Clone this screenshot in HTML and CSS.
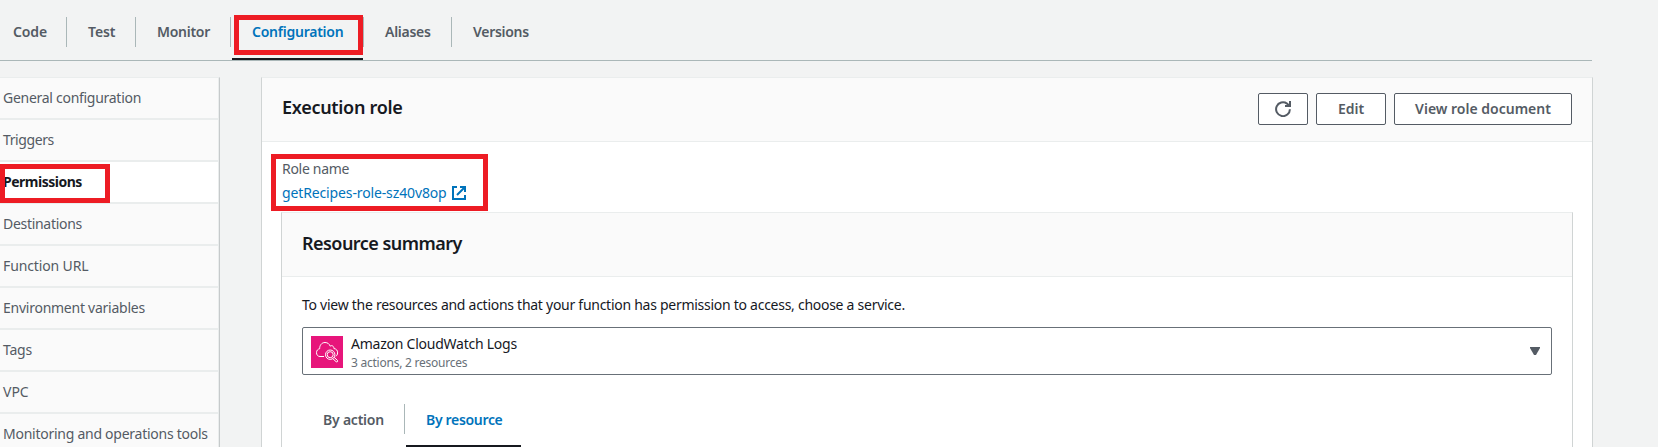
FILE: index.html
```html
<!DOCTYPE html>
<html lang="en">
<head>
<meta charset="utf-8">
<title>Execution role</title>
<link rel="stylesheet" href="styles.css">
</head>
<body>
<nav class="tabs">
  <a class="tab tab-code"><span class="t-code">Code</span></a>
  <a class="tab tab-test"><span class="t-test">Test</span></a>
  <a class="tab tab-monitor"><span class="t-monitor">Monitor</span></a>
  <a class="tab tab-config active"><span class="t-config">Configuration</span><i class="mark mark-config"></i></a>
  <a class="tab tab-aliases"><span class="t-aliases">Aliases</span></a>
  <a class="tab tab-versions"><span class="t-versions">Versions</span></a>
</nav>
<div class="layout">
  <aside class="side">
    <a class="item"><span class="s-general">General configuration</span></a>
    <a class="item"><span class="s-triggers">Triggers</span></a>
    <a class="item current"><span class="s-perm">Permissions</span><i class="mark mark-perm"></i></a>
    <a class="item"><span class="s-dest">Destinations</span></a>
    <a class="item"><span class="s-url">Function URL</span></a>
    <a class="item"><span class="s-env">Environment variables</span></a>
    <a class="item"><span class="s-tags">Tags</span></a>
    <a class="item"><span class="s-vpc">VPC</span></a>
    <a class="item"><span class="s-mon">Monitoring and operations tools</span></a>
  </aside>
  <main class="panel">
    <header class="panel-head">
      <h2><span class="h-exec">Execution role</span></h2>
      <div class="actions">
        <button class="btn btn-refresh" aria-label="Refresh"><svg width="16" height="16" viewBox="0 0 16 16" fill="none" stroke="#545b64" stroke-width="2"><path d="M14.900 8.200A6.900 6.900 0 1 1 12 2.600L14.600 5"/><path d="M15 0v5H10"/></svg></button>
        <button class="btn btn-edit"><span class="b-edit">Edit</span></button>
        <button class="btn btn-view"><span class="b-view">View role document</span></button>
      </div>
    </header>
    <section class="role">
      <div class="label"><span class="r-label">Role name</span></div>
      <a class="link"><span class="r-link">getRecipes-role-sz40v8op</span><svg class="ext" width="14" height="14" viewBox="0 0 14 14" fill="none" stroke="#0073bb" stroke-width="2"><path d="M5 1H1v12h12V9"/><path d="M8 1h5v5M13 1L5 9"/></svg></a>
      <i class="mark mark-role"></i>
    </section>
    <section class="panel inner">
      <header class="inner-head"><h2><span class="h-res">Resource summary</span></h2></header>
      <p class="desc"><span class="d-text">To view the resources and actions that your function has permission to access, choose a service.</span></p>
      <div class="select">
        <svg class="service" width="32" height="32" viewBox="0 0 32 32"><rect width="32" height="32" fill="#e7157b"/><g fill="none" stroke="#fff" stroke-width="1"><path d="M13 20.500H9C6.800 20.500 5.500 18.800 5.500 16.700C5.500 14.500 6.900 13 8.700 12.700C8.500 9.500 10.600 6.500 14 6.500C16.700 6.500 18.400 8 19.200 10.200C20.600 8.900 23 10 22.900 12.500C25.300 12.900 26.700 14.400 26.600 16.900C26.500 18.500 25.900 19.700 24.700 20.300"/><circle cx="19.200" cy="18.700" r="4.700"/><circle cx="19.200" cy="18.700" r="3"/><path d="M21.800 22.700L25.100 25.700C26.300 26.500 27.300 25.200 26.400 24.300L23.100 21.300"/></g></svg>
        <div class="choice"><span class="c-name">Amazon CloudWatch Logs</span><span class="c-sub">3 actions, 2 resources</span></div>
        <svg class="caret" width="10" height="8" viewBox="0 0 10 8"><path d="M0 0h10v1L6 8H4L0 1z" fill="#545b64"/></svg>
      </div>
      <nav class="subtabs">
        <a class="tab sub-action"><span class="t-action">By action</span></a>
        <a class="tab sub-resource active"><span class="t-resource">By resource</span></a>
      </nav>
    </section>
  </main>
</div>
</body>
</html>
```
FILE: styles.css
```css
* { box-sizing: border-box; }
body { margin: 0; height: 447px; overflow: hidden; background: #f2f3f3; color: #16191f; font: 14px/22px "Noto Sans", "Open Sans", sans-serif; }
span { white-space: nowrap; }
h2, p { margin: 0; }
h2 { font-size: 18px; line-height: 22px; font-weight: 600; }

.tabs { display: flex; width: 1592px; height: 61px; border-bottom: 1px solid #aab7b8; }
.tab { position: relative; display: block; height: 60px; padding: 21px 0 0 20px; font-weight: 600; color: #545b64; }
.tab::after { content: ""; position: absolute; right: 0; top: 17px; width: 1px; height: 30px; background: #aab7b8; }
.tab:last-child::after { display: none; }
.active { color: #0073bb; }
.active::before { content: ""; position: absolute; left: 1px; right: 0; bottom: 0; height: 2px; background: #16191f; }
.tab-code { width: 67px; padding-left: 13px; }
.tab-test { width: 69px; padding-left: 21px; }
.tab-monitor { width: 95px; padding-left: 21px; }
.tab-config { width: 132px; padding-left: 21px; }
.tab-config::after { right: -1px; }
.tab-aliases { width: 89px; padding-left: 22px; }
.tab-versions { width: 90px; padding-left: 21px; }

.mark { position: absolute; border: 5px solid #ed1c24; }
.mark-config { left: 3px; top: 15px; width: 129px; height: 40px; z-index: 1; }
.mark-perm { left: 0; top: 2px; width: 110px; height: 39px; z-index: 1; }
.mark-role { left: 9px; top: 12px; width: 217px; height: 57px; z-index: 1; }

.layout { display: flex; gap: 41px; margin-top: 16px; height: 370px; }
.side { width: 220px; border-top: 1px solid #eaeded; border-right: 1px solid #c6cacb; }
.item { position: relative; display: block; height: 42px; padding: 9px 0 0 3px; background: #fafafa; border-bottom: 2px solid #eaeded; border-right: 1px solid #eaeded; color: #545b64; }
.current { background: #fff; color: #16191f; font-weight: 700; }
.panel { width: 1332px; background: #fff; border: 1px solid #d0d4d4; border-top-color: #eaeded; border-bottom: 0; }
.panel-head { display: flex; justify-content: space-between; height: 64px; padding: 15px 20px 0; background: #fafafa; border-bottom: 1px solid #eaeded; }
.panel-head h2 { padding-top: 3px; }
.actions { display: flex; gap: 8px; }
.btn { display: flex; align-items: center; justify-content: center; height: 32px; padding: 0; background: #fff; border: 1px solid #545b64; border-radius: 2px; color: #545b64; font: 600 14px/22px "Noto Sans", sans-serif; }
.btn-refresh { width: 50px; }
.btn-edit { width: 70px; }
.btn-view { width: 178px; }

.role { position: relative; height: 70px; padding: 16px 20px 0; }
.label { color: #545b64; height: 24px; }
.link { display: flex; gap: 5px; color: #0073bb; }
.ext { margin-top: 4px; }
.inner { width: 1292px; height: 240px; margin: 0 0 0 19px; }
.inner-head { height: 64px; padding: 19px 20px 0; background: #fafafa; border-bottom: 1px solid #eaeded; }
.desc { height: 50px; padding: 17px 20px 0; }
.select { display: flex; width: 1250px; height: 48px; margin-left: 20px; padding: 8px 11px 0 8px; border: 1px solid #687078; border-radius: 2px; }
.choice { display: flex; flex-direction: column; align-items: flex-start; margin: -3px auto 0 8px; }
.c-sub { font-size: 12px; line-height: 16px; color: #687078; }
.caret { margin-top: 11px; }
.subtabs { display: flex; padding: 12px 0 0 20px; }
.subtabs .tab { height: 60px; padding-top: 22px; }
.subtabs .tab::after { top: 17px; }
.subtabs .sub-action { width: 103px; padding-left: 21px; }
.subtabs .sub-resource { width: 116px; padding-left: 21px; }

/* Tracking */
.t-code { letter-spacing: -0.1px; }
.t-test { letter-spacing: -0.1px; }
.t-monitor { letter-spacing: -0.27px; }
.t-config { letter-spacing: -0.24px; }
.t-aliases { letter-spacing: -0.28px; }
.t-versions { letter-spacing: -0.3px; }
.s-general { letter-spacing: -0.28px; }
.s-triggers { letter-spacing: -0.4px; }
.s-perm { letter-spacing: -0.5px; }
.s-dest { letter-spacing: -0.3px; }
.s-url { letter-spacing: -0.13px; }
.s-env { letter-spacing: -0.25px; }
.s-tags { letter-spacing: -0.2px; }
.s-mon { letter-spacing: -0.26px; }
.h-exec { letter-spacing: -0.3px; }
.h-res { letter-spacing: -0.54px; }
.r-label { letter-spacing: -0.3px; }
.r-link { letter-spacing: -0.13px; }
.d-text { letter-spacing: -0.27px; }
.c-name { letter-spacing: -0.24px; }
.c-sub { letter-spacing: -0.24px; }
.t-action { letter-spacing: -0.22px; }
.t-resource { letter-spacing: -0.32px; }
```
